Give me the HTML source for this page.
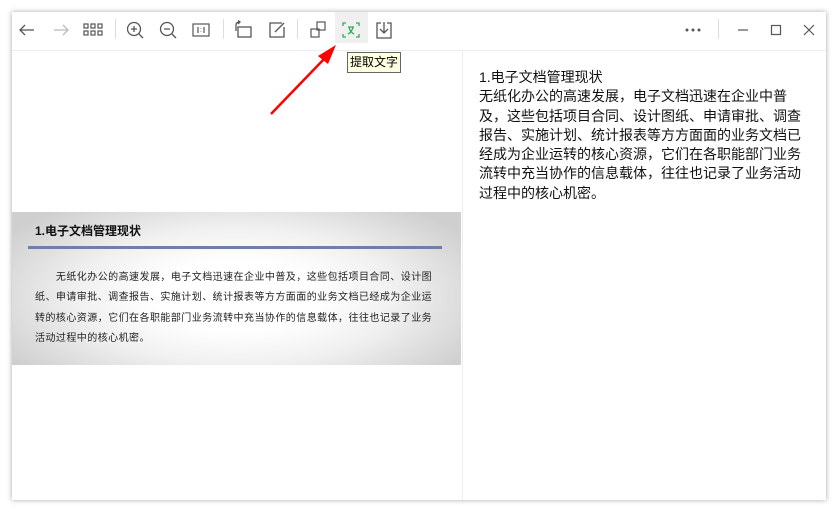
<!DOCTYPE html>
<html><head><meta charset="utf-8"><style>
body{margin:0;width:837px;height:512px;background:#fff;position:relative;overflow:hidden;font-family:"Liberation Sans","Noto Sans CJK SC",sans-serif}
.win{position:absolute;left:12px;top:12px;width:814px;height:488px;background:#fff;box-shadow:0 0 5px rgba(0,0,0,.35)}
.tb{position:absolute;left:0;top:0;width:814px;height:38px;border-bottom:1px solid #eee}
svg.i{position:absolute;top:7px;width:22px;height:22px}
.sep{position:absolute;top:7px;width:1px;height:20px;background:#ddd}
.div{position:absolute;left:450px;top:39px;width:1px;height:449px;background:#eee}
.img{position:absolute;left:0;top:200px;width:449px;height:153px;background:radial-gradient(ellipse 60% 75% at 50% 55%,#fff 30%,#f0f0f0 60%,#cfcfcf 100%)}
.t1{position:absolute;left:23px;top:10px;font-size:12px;font-weight:bold;color:#111}
.bar{position:absolute;left:16px;top:34px;width:414px;height:3px;background:#6c80a8}
.p{position:absolute;left:23px;top:56px;width:420px;font-size:10px;line-height:20.4px;color:#222;letter-spacing:0.45px;white-space:nowrap}
.rt{position:absolute;left:467px;top:56px;width:330px;font-size:14px;line-height:19.3px;color:#111}
.tip{position:absolute;left:347px;top:52px;padding:0 2px;height:19px;line-height:19px;font-size:12px;background:#ffffe1;border:1px solid #666;color:#000}
</style></head><body>
<div class="win">
<div class="tb">
<svg class="i" style="left:4px" viewBox="0 0 22 22" fill="none" stroke="#555" stroke-width="1.3"><path d="M4 11H18M9 6L4 11L9 16"/></svg>
<svg class="i" style="left:38px" viewBox="0 0 22 22" fill="none" stroke="#bbb" stroke-width="1.3"><path d="M4 11H18M13 6L18 11L13 16"/></svg>
<svg class="i" style="left:70px" viewBox="0 0 22 22" fill="none" stroke="#555" stroke-width="1.2"><rect x="2" y="5" width="4" height="4"/><rect x="9" y="5" width="4" height="4"/><rect x="16" y="5" width="4" height="4"/><rect x="2" y="12" width="4" height="4"/><rect x="9" y="12" width="4" height="4"/><rect x="16" y="12" width="4" height="4"/></svg>
<div class="sep" style="left:103px"></div>
<svg class="i" style="left:112px" viewBox="0 0 22 22" fill="none" stroke="#555" stroke-width="1.3"><circle cx="10" cy="10" r="6.5"/><path d="M15 15L19 19M7 10H13M10 7V13"/></svg>
<svg class="i" style="left:145px" viewBox="0 0 22 22" fill="none" stroke="#555" stroke-width="1.3"><circle cx="10" cy="10" r="6.5"/><path d="M15 15L19 19M7 10H13"/></svg>
<svg class="i" style="left:178px" viewBox="0 0 22 22" fill="none" stroke="#555" stroke-width="1.2"><rect x="3" y="5" width="16" height="12"/><path d="M8 8V14M14 8V14M11 9.5V10M11 12.5V13"/></svg>
<div class="sep" style="left:211px"></div>
<svg class="i" style="left:220px" viewBox="0 0 22 22" fill="none" stroke="#555" stroke-width="1.3"><rect x="6" y="8" width="13" height="10"/><path d="M4 12V6Q4 3 8 3M6 5L8 3L6 1.5"/></svg>
<svg class="i" style="left:254px" viewBox="0 0 22 22" fill="none" stroke="#555" stroke-width="1.3"><path d="M16 4H4V18H18V8M9 13L18 4"/></svg>
<div class="sep" style="left:285px"></div>
<svg class="i" style="left:295px" viewBox="0 0 22 22" fill="none" stroke="#555" stroke-width="1.2"><rect x="10" y="3" width="8" height="8"/><rect x="4" y="10" width="8" height="8"/></svg>
<div style="position:absolute;left:323px;top:0;width:33px;height:31px;background:#f0f0f0"></div>
<svg class="i" style="left:328px" viewBox="0 0 22 22" fill="none" stroke="#2eab5d" stroke-width="1.3"><path d="M3 7V4H6M16 4H19V7M19 15V18H16M6 18H3V15M8 8H14M9 8Q10 13 14 15M13 8Q12 13 8 15"/></svg>
<svg class="i" style="left:361px" viewBox="0 0 22 22" fill="none" stroke="#555" stroke-width="1.3"><path d="M8 4H4V19H18V4H14M11 3V13M7 10L11 14L15 10"/></svg>
<svg class="i" style="left:670px" viewBox="0 0 22 22" fill="#555"><circle cx="5" cy="11" r="1.5"/><circle cx="11" cy="11" r="1.5"/><circle cx="17" cy="11" r="1.5"/></svg>
<div class="sep" style="left:706px"></div>
<svg class="i" style="left:720px" viewBox="0 0 22 22" fill="none" stroke="#555" stroke-width="1.2"><path d="M6 11H16"/></svg>
<svg class="i" style="left:753px" viewBox="0 0 22 22" fill="none" stroke="#555" stroke-width="1.2"><rect x="6.5" y="6.5" width="9" height="9"/></svg>
<svg class="i" style="left:786px" viewBox="0 0 22 22" fill="none" stroke="#555" stroke-width="1.2"><path d="M6 6L16 16M16 6L6 16"/></svg>
</div>
<div class="div"></div>
<div class="img">
<div class="t1">1.电子文档管理现状</div>
<div class="bar"></div>
<div class="p">&emsp;&emsp;无纸化办公的高速发展，电子文档迅速在企业中普及，这些包括项目合同、设计图<br>纸、申请审批、调查报告、实施计划、统计报表等方方面面的业务文档已经成为企业运<br>转的核心资源，它们在各职能部门业务流转中充当协作的信息载体，往往也记录了业务<br>活动过程中的核心机密。</div>
</div>
<div class="rt">1.电子文档管理现状<br>无纸化办公的高速发展，电子文档迅速在企业中普及，这些包括项目合同、设计图纸、申请审批、调查报告、实施计划、统计报表等方方面面的业务文档已经成为企业运转的核心资源，它们在各职能部门业务流转中充当协作的信息载体，往往也记录了业务活动过程中的核心机密。</div>
</div>
<div class="tip">提取文字</div>
<svg style="position:absolute;left:0;top:0" width="837" height="512"><path d="M271 114L326 57" stroke="#f00" stroke-width="2.5"/><path d="M336 45L318 56L328 64Z" fill="#f00"/></svg>
</body></html>
